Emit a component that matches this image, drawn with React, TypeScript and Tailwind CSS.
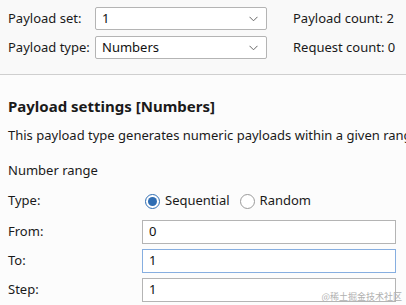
import React from 'react';

const font = { fontFamily: '"Noto Sans", "Open Sans", sans-serif' };

const Select = ({ value }: { value: string }) => (
  <div className="w-[172px] h-[23px] border border-[#b4b4b4] bg-white rounded-[2px] flex items-center justify-between pl-[6px] pr-[8px]">
    <span className="text-[13px] text-[#111]">{value}</span>
    <svg width="9" height="6" viewBox="0 0 9 6" fill="none">
      <path d="M0.5 0.8 L4.5 4.8 L8.5 0.8" stroke="#666" strokeWidth="1" />
    </svg>
  </div>
);

const Field = ({ value, focused }: { value: string; focused?: boolean }) => (
  <div
    className={
      'w-[254px] h-[24px] bg-white flex items-center pl-[6px] text-[13px] text-[#111] border ' +
      (focused ? 'border-[#86aee0]' : 'border-[#b4b4b4]')
    }
  >
    {value}
  </div>
);

export default function App() {
  const rows = [
    { label: 'From:', value: '0' },
    { label: 'To:', value: '1', focused: true },
    { label: 'Step:', value: '1' },
  ];

  return (
    <div className="relative w-[406px] h-[305px] overflow-hidden bg-[#fcfcfc] text-[#1a1a1a]" style={font}>
      {/* top bar */}
      <div className="h-[75px] bg-[#f9f9f9] border-b border-[#cfcfcf] pt-[7px] pl-[8px] flex flex-col gap-[6px]">
        <div className="flex items-center h-[23px]">
          <span className="w-[87px] text-[13px]">Payload set:</span>
          <Select value="1" />
          <span className="ml-[26px] text-[13px]">Payload count: 2</span>
        </div>
        <div className="flex items-center h-[23px]">
          <span className="w-[87px] text-[13px]">Payload type:</span>
          <Select value="Numbers" />
          <span className="ml-[26px] text-[13px]">Request count: 0</span>
        </div>
      </div>

      {/* settings */}
      <div className="pl-[8px] pt-[21px]">
        <h2 className="text-[15px] font-bold leading-[20px]">Payload settings [Numbers]</h2>
        <p className="mt-[10px] text-[13px] leading-[18px] whitespace-nowrap">
          This payload type generates numeric payloads within a given range and format.
        </p>
        <p className="mt-[17px] text-[13px] leading-[18px]">Number range</p>

        <div className="mt-[12px] flex items-center h-[20px]">
          <span className="w-[137px] text-[13px]">Type:</span>
          <label className="flex items-center gap-[5px] text-[13px]">
            <span className="w-[15px] h-[15px] rounded-full border border-[#2f6db3] bg-white flex items-center justify-center">
              <span className="w-[9px] h-[9px] rounded-full bg-[#2f6db3]" />
            </span>
            Sequential
          </label>
          <label className="ml-[10px] flex items-center gap-[5px] text-[13px]">
            <span className="w-[15px] h-[15px] rounded-full border border-[#9a9a9a] bg-white" />
            Random
          </label>
        </div>

        <div className="mt-[9px] flex flex-col gap-[5px]">
          {rows.map(r => (
            <div key={r.label} className="flex items-center">
              <span className="w-[134px] text-[13px]">{r.label}</span>
              <Field value={r.value} focused={r.focused} />
            </div>
          ))}
        </div>
      </div>

      <span
        className="absolute right-[4px] bottom-[2px] text-[9px] text-[#b0b0b0]"
        style={{ fontFamily: '"Noto Sans CJK SC", sans-serif' }}
      >
        @稀土掘金技术社区
      </span>
    </div>
  );
}
